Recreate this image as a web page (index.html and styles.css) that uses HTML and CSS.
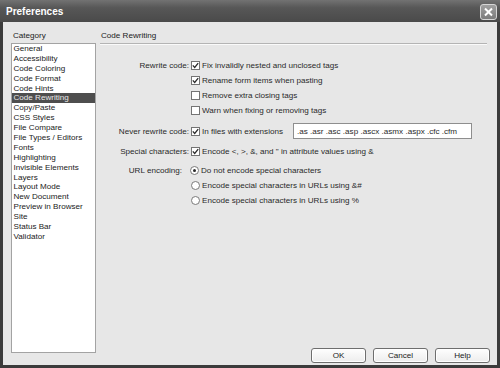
FILE: index.html
```html
<!DOCTYPE html>
<html lang="en">
  <head>
    <meta charset="utf-8">
    <title>Preferences</title>
    <link rel="stylesheet" href="styles.css">
  </head>
  <body>
    <div class="window">
      <div class="titlebar">
        <span class="title">Preferences</span>
        <button class="close">
          <svg width="11" height="10" viewBox="0 0 11 10"><path d="M2 1.5 L9 8.5 M9 1.5 L2 8.5" stroke="#fff" stroke-width="2" fill="none"/></svg>
        </button>
      </div>
      <div class="client">
        <div class="sidebar">
          <div class="caption">Category</div>
          <ul class="list">
            <li>General</li>
            <li>Accessibility</li>
            <li>Code Coloring</li>
            <li>Code Format</li>
            <li>Code Hints</li>
            <li class="selected">Code Rewriting</li>
            <li>Copy/Paste</li>
            <li>CSS Styles</li>
            <li>File Compare</li>
            <li>File Types / Editors</li>
            <li>Fonts</li>
            <li>Highlighting</li>
            <li>Invisible Elements</li>
            <li>Layers</li>
            <li>Layout Mode</li>
            <li>New Document</li>
            <li>Preview in Browser</li>
            <li>Site</li>
            <li>Status Bar</li>
            <li>Validator</li>
          </ul>
        </div>
        <div class="panel">
          <div class="heading">Code Rewriting</div>
          <div class="form">
            <div class="row">
              <span class="label">Rewrite code:</span>
              <span class="check on"><svg width="7" height="7" viewBox="0 0 7 7"><path d="M0.8 3.4 L2.7 5.4 L6.2 1.2" stroke="#2a2a2a" stroke-width="1.3" fill="none"/></svg></span>
              <span class="text">Fix invalidly nested and unclosed tags</span>
            </div>
            <div class="row">
              <span class="label"></span>
              <span class="check on"><svg width="7" height="7" viewBox="0 0 7 7"><path d="M0.8 3.4 L2.7 5.4 L6.2 1.2" stroke="#2a2a2a" stroke-width="1.3" fill="none"/></svg></span>
              <span class="text">Rename form items when pasting</span>
            </div>
            <div class="row">
              <span class="label"></span>
              <span class="check"></span>
              <span class="text">Remove extra closing tags</span>
            </div>
            <div class="row">
              <span class="label"></span>
              <span class="check"></span>
              <span class="text">Warn when fixing or removing tags</span>
            </div>
            <div class="row tall spaced">
              <span class="label">Never rewrite code:</span>
              <span class="check on"><svg width="7" height="7" viewBox="0 0 7 7"><path d="M0.8 3.4 L2.7 5.4 L6.2 1.2" stroke="#2a2a2a" stroke-width="1.3" fill="none"/></svg></span>
              <span class="text">In files with extensions</span>
              <input class="ext" type="text" value=".as .asr .asc .asp .ascx .asmx .aspx .cfc .cfm">
            </div>
            <div class="row spaced">
              <span class="label">Special characters:</span>
              <span class="check on"><svg width="7" height="7" viewBox="0 0 7 7"><path d="M0.8 3.4 L2.7 5.4 L6.2 1.2" stroke="#2a2a2a" stroke-width="1.3" fill="none"/></svg></span>
              <span class="text">Encode &lt;, &gt;, &amp;, and " in attribute values using &amp;</span>
            </div>
            <div class="row spaced">
              <span class="label short">URL encoding:</span>
              <span class="radio on"></span>
              <span class="text">Do not encode special characters</span>
            </div>
            <div class="row">
              <span class="label"></span>
              <span class="radio"></span>
              <span class="text">Encode special characters in URLs using &amp;#</span>
            </div>
            <div class="row">
              <span class="label"></span>
              <span class="radio"></span>
              <span class="text">Encode special characters in URLs using %</span>
            </div>
          </div>
          <div class="buttons">
            <button class="btn">OK</button>
            <button class="btn">Cancel</button>
            <button class="btn">Help</button>
          </div>
        </div>
      </div>
    </div>
  </body>
</html>
```

FILE: styles.css
```css
*{
    box-sizing: border-box;
}
body{
    margin: 0;
    background: #3a3a3a;
    font-family: "Liberation Sans", Arial, sans-serif;
    font-size: 8.1px;
    color: #222;
}
.window{
    width: 500px;
    height: 368px;
    display: flex;
    flex-direction: column;
    background: #3b3b3b;
}
.titlebar{
    height: 22px;
    flex: none;
    display: flex;
    align-items: center;
    justify-content: space-between;
    padding: 0 3px 0 6px;
    background: linear-gradient(#727272, #575757 35%, #4a4a4a);
}
.title{
    color: #fff;
    font-weight: bold;
    font-size: 10px;
    margin-top: 1px;
}
.close{
    width: 17px;
    height: 16px;
    padding: 0;
    margin-top: 1px;
    display: flex;
    align-items: center;
    justify-content: center;
    background: linear-gradient(#a0a0a0, #7c7c7c);
    border: 1px solid #d6d6d6;
    border-radius: 3px;
}
.client{
    flex: 1;
    margin: 0 3px 3px;
    background: #e7e7e7;
    display: flex;
    gap: 4px;
    padding: 8px 7px 2px 8px;
}
.caption{
    line-height: 11px;
    height: 13px;
    padding-left: 2px;
}
.list{
    list-style: none;
    margin: 0;
    padding: 0;
    width: 85px;
    height: 310px;
    background: #fff;
    border: 1px solid #a3a3a3;
}
.list li{
    height: 9.9px;
    line-height: 9.9px;
    padding-left: 1.5px;
    white-space: nowrap;
}
.list .selected{
    background: #4e4e4e;
    color: #e8e8e8;
}
.panel{
    flex: 1;
    display: flex;
    flex-direction: column;
}
.heading{
    line-height: 11px;
    padding: 0 0 2px 1px;
    margin-right: 3px;
    border-bottom: 1px solid #b4b4b4;
    box-shadow: 0 1px #fafafa;
}
.form{
    margin-top: 14px;
    color: #2a2a2a;
}
.row{
    display: flex;
    align-items: center;
    height: 15px;
}
.row.tall{
    height: 18px;
}
.row.spaced{
    margin-top: 4px;
}
.label{
    width: 89px;
    flex: none;
    text-align: right;
    margin-right: 2px;
    white-space: nowrap;
}
.label.short{
    padding-right: 7px;
    margin-right: 1px;
}
.check{
    width: 9px;
    height: 9px;
    flex: none;
    border: 1px solid #747474;
    background: #fff;
    display: flex;
}
.radio{
    width: 9px;
    height: 9px;
    flex: none;
    border: 1px solid #7a7a7a;
    border-radius: 50%;
    background: #fff;
    display: flex;
    align-items: center;
    justify-content: center;
}
.radio.on::after{
    content: "";
    width: 3px;
    height: 3px;
    border-radius: 50%;
    background: #2a2a2a;
}
.text{
    margin-left: 2px;
    white-space: nowrap;
}
.ext{
    width: 179px;
    height: 16px;
    margin-left: 10px;
    padding: 0 0 0 3px;
    border: 1px solid #8e8e8e;
    background: #fff;
    font: inherit;
    color: #2a2a2a;
}
.buttons{
    margin-top: auto;
    display: flex;
    justify-content: flex-end;
    gap: 7px;
}
.btn{
    width: 55px;
    height: 15px;
    padding: 0;
    border: 1px solid #6e6e6e;
    border-radius: 3px;
    background: linear-gradient(#fefefe, #ededed);
    box-shadow: inset 0 0 0 1px #fff;
    font: inherit;
    color: #222;
}
```
